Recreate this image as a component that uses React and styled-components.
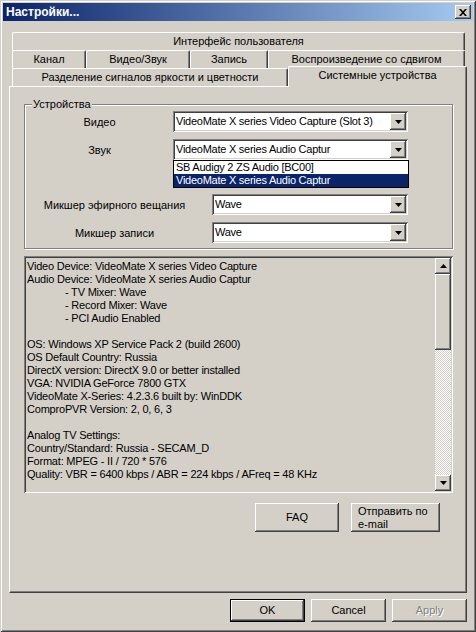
import React from 'react';
import styled, { createGlobalStyle } from 'styled-components';

const C = { face: '#d4d0c8', hi: '#ffffff', sh: '#808080', dk: '#404040', navy: '#0a246a' };

const Global = createGlobalStyle`
  html, body { margin: 0; padding: 0; background: ${C.face}; }
  body { font-family: "Liberation Sans", Arial, sans-serif; font-size: 11px; color: #000; }
  * { box-sizing: border-box; }
`;

const Window = styled.div`
  width: 476px;
  height: 632px;
  background: ${C.face};
  padding: 3px;
  display: flex;
  flex-direction: column;
  box-shadow: inset 1px 1px 0 ${C.face}, inset -1px -1px 0 ${C.dk},
    inset 2px 2px 0 ${C.hi}, inset -2px -2px 0 ${C.sh};
`;

const TitleBar = styled.div`
  height: 18px;
  flex: none;
  display: flex;
  align-items: center;
  justify-content: space-between;
  padding: 0 2px 0 3px;
  background: linear-gradient(to right, #0a246a, #a6caf0);
  color: #fff;
  font-weight: bold;
  font-size: 12px;
`;

const raised = `
  background: ${C.face};
  box-shadow: inset -1px -1px 0 ${C.dk}, inset 1px 1px 0 ${C.hi}, inset -2px -2px 0 ${C.sh};
`;

const CloseBtn = styled.div`
  width: 16px;
  height: 14px;
  ${raised}
  display: flex;
  align-items: center;
  justify-content: center;
  padding-right: 1px;
`;

const Body = styled.div`
  flex: 1;
  display: flex;
  flex-direction: column;
  padding: 11px 6px 7px 6px;
  min-height: 0;
`;

const TabRow = styled.div`
  height: 18px;
  flex: none;
  display: flex;
  align-items: flex-start;
  padding: 0 2px 0 3px;
  position: relative;
  z-index: ${(p) => p.$z || 0};
`;

const Tab = styled.div`
  height: ${(p) => (p.$active ? '21px' : '18px')};
  margin-top: ${(p) => (p.$active ? '-2px' : '0')};
  margin-right: ${(p) => (p.$active ? '-2px' : '0')};
  ${(p) => (p.$w ? `width: ${p.$w}px; flex: none;` : 'flex: 1;')}
  background: ${C.face};
  border-top: 1px solid ${C.hi};
  border-left: 1px solid ${C.hi};
  border-right: 1px solid ${C.dk};
  border-radius: 2px 2px 0 0;
  box-shadow: inset -1px 0 0 ${C.sh};
  display: flex;
  justify-content: center;
  padding-top: 2px;
  line-height: 13px;
  white-space: nowrap;
  position: relative;
  z-index: ${(p) => (p.$active ? 2 : 0)};
`;

const Panel = styled.div`
  flex: 1;
  display: flex;
  flex-direction: column;
  border-top: 1px solid ${C.hi};
  border-left: 1px solid ${C.hi};
  border-right: 1px solid ${C.dk};
  border-bottom: 1px solid ${C.dk};
  box-shadow: inset -1px -1px 0 ${C.sh};
  padding: 17px 13px 0 14px;
  position: relative;
  z-index: 1;
`;

const Group = styled.div`
  position: relative;
  border: 1px solid ${C.sh};
  box-shadow: inset 1px 1px 0 ${C.hi}, 1px 1px 0 ${C.hi};
  padding: 6px 44px 5px 1px;
  display: flex;
  flex-direction: column;
`;

const Legend = styled.span`
  position: absolute;
  top: -7px;
  left: 7px;
  padding: 0 1px;
  background: ${C.face};
  line-height: 13px;
`;

const Row = styled.div`
  display: flex;
  align-items: center;
  height: 21px;
  margin-bottom: ${(p) => p.$mb}px;
`;

const Label = styled.div`
  flex: 1;
  text-align: center;
  padding-right: ${(p) => p.$pr || 0}px;
  white-space: nowrap;
`;

const sunken = `
  box-shadow: inset 1px 1px 0 ${C.sh}, inset -1px -1px 0 ${C.hi},
    inset 2px 2px 0 ${C.dk}, inset -2px -2px 0 ${C.face};
`;

const Select = styled.div`
  position: relative;
  width: ${(p) => p.$w}px;
  height: 21px;
  background: #fff;
  ${sunken}
  display: flex;
  align-items: center;
  padding: 2px 2px 2px 3px;
`;

const SelectText = styled.div`
  flex: 1;
  white-space: nowrap;
  overflow: hidden;
  line-height: 13px;
  letter-spacing: -0.25px;
`;

const DropBtn = styled.div`
  width: 16px;
  height: 17px;
  flex: none;
  ${raised}
  display: flex;
  align-items: center;
  justify-content: center;
`;

const DropList = styled.div`
  position: absolute;
  left: 0;
  top: 100%;
  width: calc(100% + 1px);
  background: #fff;
  border: 1px solid #000;
  z-index: 5;
`;

const DropItem = styled.div`
  height: 13px;
  line-height: 13px;
  padding-left: 2px;
  letter-spacing: -0.25px;
  background: ${(p) => (p.$sel ? C.navy : '#fff')};
  color: ${(p) => (p.$sel ? '#fff' : '#000')};
  white-space: nowrap;
`;

const InfoBox = styled.div`
  margin-top: 7px;
  height: 237px;
  flex: none;
  display: flex;
  padding: 2px;
  ${sunken}
`;

const InfoText = styled.div`
  flex: 1;
  padding: 2px 0 0 1px;
  overflow: hidden;
  letter-spacing: -0.2px;
`;

const Line = styled.div`
  height: 13px;
  line-height: 13px;
  white-space: nowrap;
  padding-left: ${(p) => (p.$indent ? 38 : 0)}px;
`;

const ScrollBar = styled.div`
  width: 16px;
  flex: none;
  display: flex;
  flex-direction: column;
`;

const ScrollBtn = styled.div`
  width: 16px;
  height: 16px;
  flex: none;
  ${raised}
  display: flex;
  align-items: center;
  justify-content: center;
`;

const Thumb = styled.div`
  height: 76px;
  flex: none;
  ${raised}
`;

const Track = styled.div`
  flex: 1;
  background: repeating-conic-gradient(${C.face} 0 25%, #fff 0 50%) 0 0 / 2px 2px;
`;

const ActionRow = styled.div`
  display: flex;
  justify-content: flex-end;
  gap: 12px;
  margin: 10px 13px 0 0;
`;

const Button = styled.div`
  width: ${(p) => p.$w}px;
  height: ${(p) => p.$h}px;
  flex: none;
  ${raised}
  ${(p) => (p.$default ? `border: 1px solid #000;` : '')}
  display: flex;
  flex-direction: column;
  align-items: ${(p) => (p.$left ? 'flex-start' : 'center')};
  justify-content: center;
  padding-left: ${(p) => (p.$left ? 7 : 0)}px;
  line-height: 13px;
  color: ${(p) => (p.$disabled ? C.sh : '#000')};
  text-shadow: ${(p) => (p.$disabled ? '1px 1px 0 #fff' : 'none')};
  white-space: nowrap;
`;

const FooterRow = styled.div`
  display: flex;
  justify-content: flex-end;
  gap: 6px;
  margin-top: 6px;
  flex: none;
`;

const Arrow = ({ up }) => (
  <svg width="7" height="4" viewBox="0 0 7 4">
    <path d={up ? 'M0 4h7L3.5 0z' : 'M0 0h7L3.5 4z'} fill="#000" />
  </svg>
);

const CloseIcon = () => (
  <svg width="8" height="7" viewBox="0 0 8 7">
    <path d="M0 0h2l2 2.2L6 0h2L5 3.5 8 7H6L4 4.8 2 7H0l3-3.5z" fill="#000" />
  </svg>
);

const DeviceSelect = ({ w, value, children }) => (
  <Select $w={w}>
    <SelectText>{value}</SelectText>
    <DropBtn>
      <Arrow />
    </DropBtn>
    {children}
  </Select>
);

const infoLines = [
  ['Video Device: VideoMate X series Video Capture'],
  ['Audio Device: VideoMate X series Audio Captur'],
  ['- TV Mixer: Wave', 1],
  ['- Record Mixer: Wave', 1],
  ['- PCI Audio Enabled', 1],
  [''],
  ['OS: Windows XP Service Pack 2 (build 2600)'],
  ['OS Default Country: Russia'],
  ['DirectX version: DirectX 9.0 or better installed'],
  ['VGA: NVIDIA GeForce 7800 GTX'],
  ['VideoMate X-Series: 4.2.3.6 built by: WinDDK'],
  ['ComproPVR Version: 2, 0, 6, 3'],
  [''],
  ['Analog TV Settings:'],
  ['Country/Standard: Russia - SECAM_D'],
  ['Format: MPEG - II / 720 * 576'],
  ['Quality: VBR = 6400 kbps / ABR = 224 kbps / AFreq = 48 KHz'],
];

export default function App() {
  return (
    <>
      <Global />
      <Window>
        <TitleBar>
          <span>Настройки...</span>
          <CloseBtn>
            <CloseIcon />
          </CloseBtn>
        </TitleBar>
        <Body>
          <TabRow>
            <Tab>Интерфейс пользователя</Tab>
          </TabRow>
          <TabRow>
            <Tab $w={74}>Канал</Tab>
            <Tab $w={104}>Видео/Звук</Tab>
            <Tab $w={78}>Запись</Tab>
            <Tab>Воспроизведение со сдвигом</Tab>
          </TabRow>
          <TabRow $z={2}>
            <Tab $w={276}>Разделение сигналов яркости и цветности</Tab>
            <Tab $active>Системные устройства</Tab>
          </TabRow>
          <Panel>
            <Group>
              <Legend>Устройства</Legend>
              <Row $mb={7}>
                <Label>Видео</Label>
                <DeviceSelect w={235} value="VideoMate X series Video Capture (Slot 3)" />
              </Row>
              <Row $mb={34}>
                <Label>Звук</Label>
                <DeviceSelect w={235} value="VideoMate X series Audio Captur">
                  <DropList>
                    <DropItem>SB Audigy 2 ZS Audio [BC00]</DropItem>
                    <DropItem $sel>VideoMate X series Audio Captur</DropItem>
                  </DropList>
                </DeviceSelect>
              </Row>
              <Row $mb={7}>
                <Label $pr={9}>Микшер эфирного вещания</Label>
                <DeviceSelect w={196} value="Wave" />
              </Row>
              <Row $mb={0}>
                <Label $pr={9}>Микшер записи</Label>
                <DeviceSelect w={196} value="Wave" />
              </Row>
            </Group>
            <InfoBox>
              <InfoText>
                {infoLines.map(([t, ind], i) => (
                  <Line key={i} $indent={ind}>
                    {t}
                  </Line>
                ))}
              </InfoText>
              <ScrollBar>
                <ScrollBtn>
                  <Arrow up />
                </ScrollBtn>
                <Thumb />
                <Track />
                <ScrollBtn>
                  <Arrow />
                </ScrollBtn>
              </ScrollBar>
            </InfoBox>
            <ActionRow>
              <Button $w={84} $h={29}>FAQ</Button>
              <Button $w={89} $h={29} $left>
                <span>Отправить по</span>
                <span>e-mail</span>
              </Button>
            </ActionRow>
          </Panel>
          <FooterRow>
            <Button $w={75} $h={23} $default>OK</Button>
            <Button $w={75} $h={23}>Cancel</Button>
            <Button $w={75} $h={23} $disabled>Apply</Button>
          </FooterRow>
        </Body>
      </Window>
    </>
  );
}
